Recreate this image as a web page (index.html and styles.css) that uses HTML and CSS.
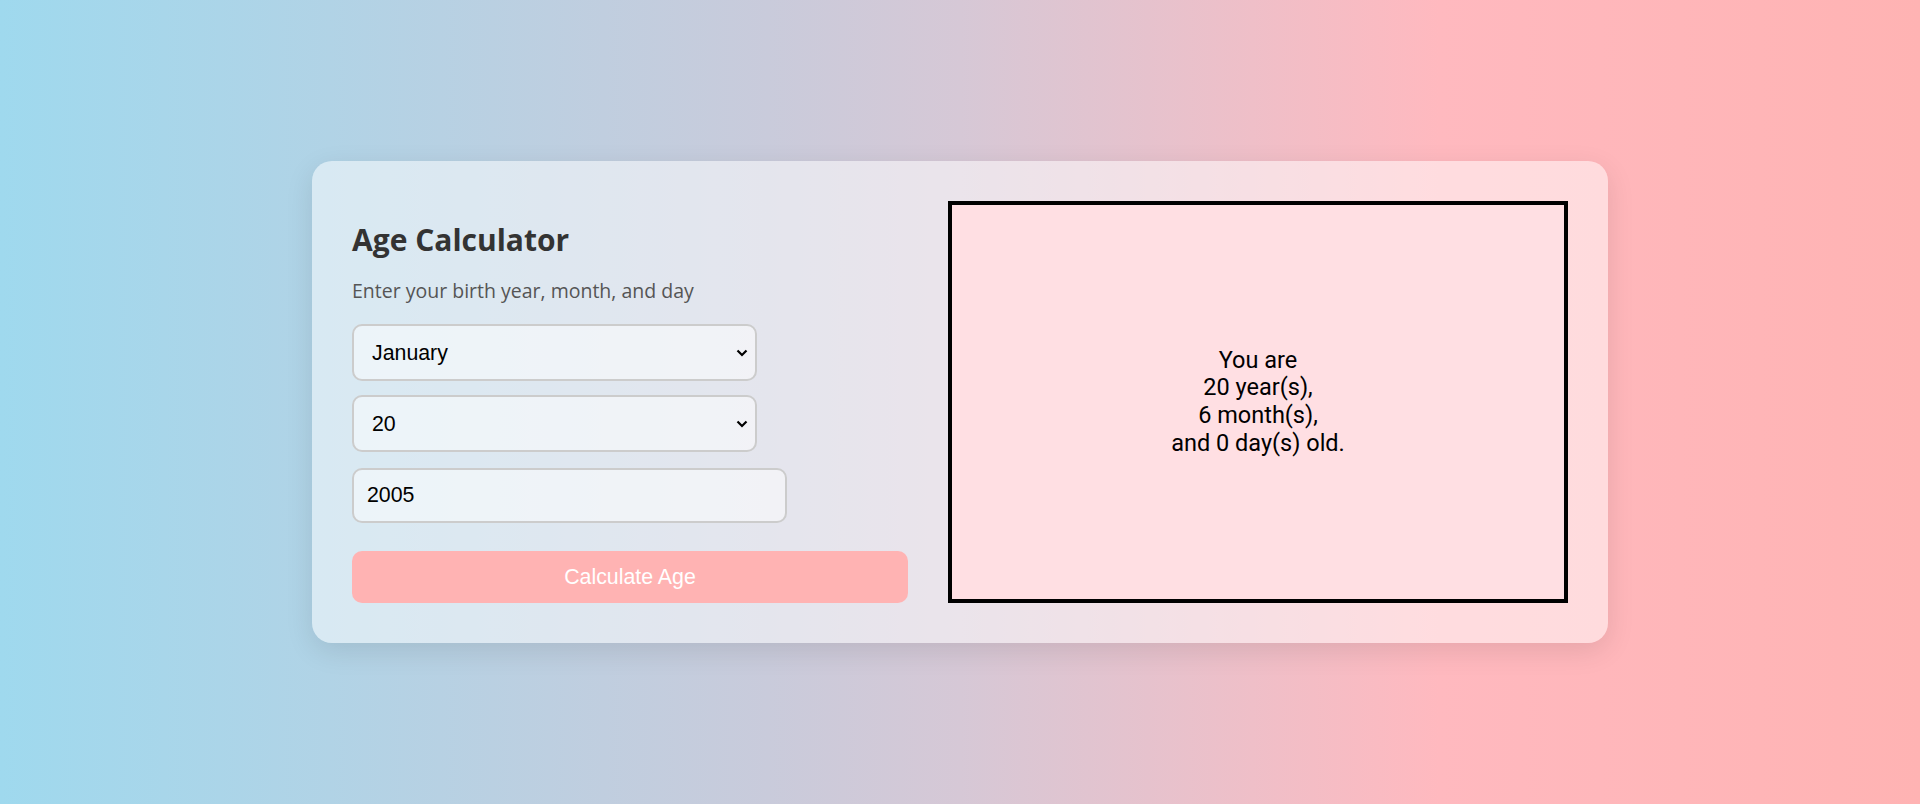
FILE: index.html
```html
<!DOCTYPE html>
<html lang="en">
<head>
<meta charset="utf-8">
<title>Age Calculator</title>
<link rel="stylesheet" href="styles.css">
</head>
<body>
  <main class="card">
    <section class="form-col">
      <h2 class="title">Age Calculator</h2>
      <p class="subtitle">Enter your birth year, month, and day</p>
      <select class="field select-field">
        <option>January</option>
      </select>
      <select class="field select-field">
        <option>20</option>
      </select>
      <input class="field input-field" type="text" value="2005">
      <button class="calc-btn" type="button">Calculate Age</button>
    </section>
    <section class="result">
      <p class="result-text">You are<br>20 year(s),<br>6 month(s),<br>and 0 day(s) old.</p>
    </section>
  </main>
</body>
</html>
```

FILE: styles.css
```css
* { box-sizing: border-box; }

html, body { height: 100%; }

body {
  margin: 0;
  min-height: 100vh;
  display: flex;
  align-items: center;
  justify-content: center;
  background: linear-gradient(90deg, #9fd9ee 0%, #c9cbdb 40%, #d6c8d6 50%, #ffb9bf 75%, #ffb3b3 100%);
  font-family: "Open Sans", Lato, sans-serif;
}

.card {
  width: 1296px;
  padding: 40px;
  display: flex;
  gap: 40px;
  border-radius: 20px;
  background: rgba(255, 255, 255, 0.5);
  box-shadow: 0 8px 28px rgba(0, 0, 0, 0.1);
}

.form-col {
  flex: 0 0 556px;
  display: flex;
  flex-direction: column;
  align-items: flex-start;
}

.title {
  margin: 21px 0 0;
  font-size: 30px;
  line-height: 36px;
  font-weight: 700;
  color: #333;
}

.subtitle {
  margin: 21px 0 0;
  font-size: 19.5px;
  line-height: 24px;
  color: #555;
}

.field {
  display: block;
  margin: 0;
  border: 2px solid #cccccc;
  border-radius: 10px;
  background-color: rgba(255, 255, 255, 0.5);
  font-family: "Liberation Sans", Arial, sans-serif;
  font-size: 21.33px;
  color: #000;
  outline: none;
}

.select-field {
  width: 405px;
  height: 57px;
  padding: 0 30px 0 18px;
  -webkit-appearance: none;
  appearance: none;
  background-image: url("data:image/svg+xml;utf8,<svg xmlns='http://www.w3.org/2000/svg' width='12' height='8' viewBox='0 0 12 8'><path d='M1.5 1.5 L6 6 L10.5 1.5' fill='none' stroke='black' stroke-width='2.2'/></svg>");
  background-repeat: no-repeat;
  background-position: right 7px center;
  background-size: 12px 8px;
}

.select-field + .select-field { margin-top: 14px; }

.select-field:first-of-type { margin-top: 21px; }

.input-field {
  width: 435px;
  height: 55px;
  margin-top: 16px;
  padding: 0 13px;
}

.calc-btn {
  width: 100%;
  height: 52px;
  margin-top: 28px;
  border: none;
  border-radius: 10px;
  background: #ffb3b3;
  color: #fff;
  font-family: "Liberation Sans", Arial, sans-serif;
  font-size: 21.33px;
  cursor: pointer;
}

.result {
  flex: 1 1 0;
  display: flex;
  align-items: center;
  justify-content: center;
  border: 4px solid #000;
  background: #ffdfe3;
}

.result-text {
  margin: 0;
  text-align: center;
  font-family: Roboto, "Open Sans", sans-serif;
  font-size: 23.5px;
  line-height: 27.7px;
  color: #000;
}
```
